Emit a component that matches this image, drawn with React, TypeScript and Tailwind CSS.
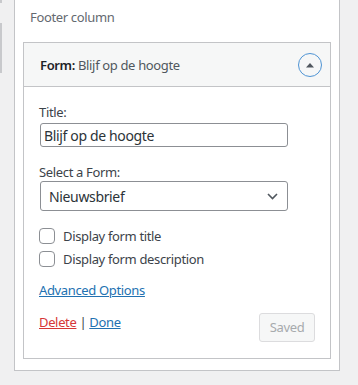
function App() {
  return (
    <div className="min-h-screen bg-[#f0f0f1] flex text-[13px] tracking-[-0.35px] text-[#3c434a] font-['Noto_Sans',sans-serif]">
      <div className="w-[2px] flex flex-col">
        <div className="h-[3px] bg-[#c8c9cc]" />
        <div className="h-[20px]" />
        <div className="h-[50px] bg-[#c8c9cc]" />
      </div>

      <div className="ml-[12px] w-[326px] h-[371px] bg-white border border-t-0 border-[#c3c4c7] px-[8px]">
        <div className="h-[42px] pl-[7px] pt-[7px] leading-[20px] text-[#646970]">Footer column</div>

        <div className="border border-[#c3c4c7]">
          <div className="h-[44px] bg-[#f6f7f7] border-b border-[#c3c4c7] flex items-center justify-between pl-[16px] pr-[8px]">
            <div className="leading-[20px] text-[#50575e]">
              <span className="font-semibold text-[#1d2327]">Form:</span> Blijf op de hoogte
            </div>
            <button className="w-[24px] h-[24px] rounded-full border-[1.5px] border-[#4f94d4] flex items-center justify-center">
              <svg width="10" height="6" viewBox="0 0 10 6">
                <path d="M1 5.5 L5 1 L9 5.5 Z" fill="#50575e" />
              </svg>
            </button>
          </div>

          <div className="pl-[15px] pr-[15px] pt-[15px] pb-[16px]">
            <div className="leading-[20px]">Title:</div>
            <input
              className="mt-[1px] ml-[1px] w-[248px] h-[24px] border border-[#8c8f94] rounded-[3px] px-[3px] text-[14px] tracking-[-0.35px] text-[#2c3338] outline-none"
              defaultValue="Blijf op de hoogte"
            />

            <div className="mt-[16px] leading-[18px]">Select a Form:</div>
            <div className="ml-[1px] w-[248px] h-[30px] border border-[#8c8f94] rounded-[3px] pl-[8px] pr-[9px] flex items-center justify-between text-[14px] text-[#2c3338]">
              <span>Nieuwsbrief</span>
              <svg width="11" height="7" viewBox="0 0 11 7" fill="none">
                <path d="M1 1 L5.5 5.5 L10 1" stroke="#50575e" strokeWidth="1.6" />
              </svg>
            </div>

            <div className="mt-[14px]">
              <label className="h-[22px] flex items-center gap-[8px]">
                <span className="w-[16px] h-[16px] border border-[#8c8f94] rounded-[4px] bg-white" />
                <span className="mt-[2px]">Display form title</span>
              </label>
              <label className="h-[23px] flex items-center gap-[8px]">
                <span className="w-[16px] h-[16px] border border-[#8c8f94] rounded-[4px] bg-white" />
                <span className="mt-[2px]">Display form description</span>
              </label>
            </div>

            <div className="mt-[10px] leading-[20px]">
              <a className="text-[#2271b1] underline">Advanced Options</a>
            </div>

            <div className="mt-[12px] flex items-start justify-between">
              <div className="leading-[20px]">
                <a className="text-[#d63638] underline">Delete</a>
                <span className="text-[#3c434a]"> | </span>
                <a className="text-[#2271b1] underline">Done</a>
              </div>
              <button className="mt-[1px] w-[56px] h-[29px] rounded-[3px] border border-[#dcdcde] bg-[#f6f7f7] text-[#a7aaad] text-[13px]">
                Saved
              </button>
            </div>
          </div>
        </div>
      </div>
    </div>
  );
}

export default App;
